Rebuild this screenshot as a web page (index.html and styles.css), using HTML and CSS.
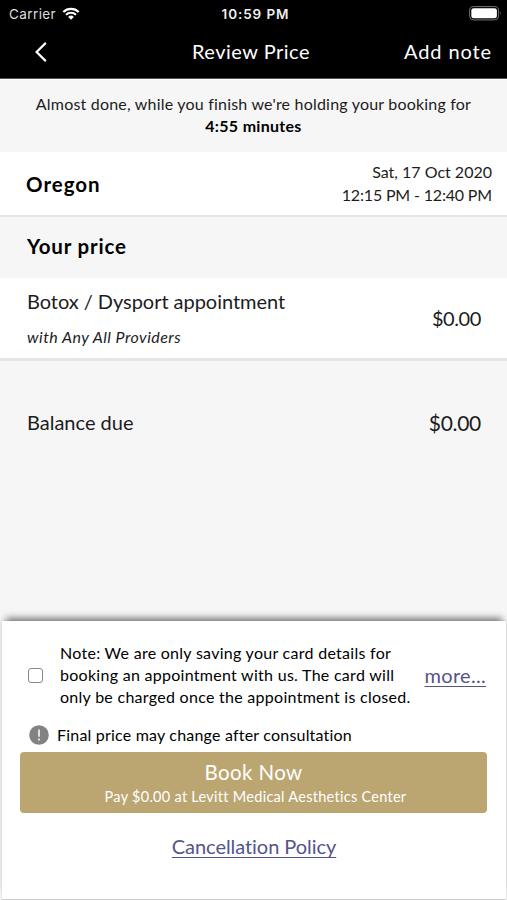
FILE: index.html
```html
<!DOCTYPE html>
<html lang="en">
<head>
    <meta charset="UTF-8">
    <meta name="viewport" content="width=device-width, initial-scale=1">
    <title>Review Price</title>
    <link rel="stylesheet" href="styles.css">
</head>
<body>
    <header class="top">
        <div class="status-bar">
            <div class="carrier">
                <span>Carrier</span>
                <svg class="wifi" viewBox="0 0 18 13" width="18" height="13">
                    <path d="M1.3 5 A11 11 0 0 1 16.7 5" fill="none" stroke="#fff" stroke-width="2.2"/>
                    <path d="M4 7.8 A7.2 7.2 0 0 1 14 7.8" fill="none" stroke="#fff" stroke-width="2.1"/>
                    <path d="M9 12.7 L6.2 9.9 A4 4 0 0 1 11.8 9.9 Z" fill="#fff"/>
                </svg>
            </div>
            <span class="clock">10:59 PM</span>
            <svg class="battery" viewBox="0 0 33 15" width="33" height="15">
                <rect x="0.6" y="0.6" width="29" height="13.3" rx="4" fill="none" stroke="#777" stroke-width="1"/>
                <rect x="2.3" y="2.3" width="25.6" height="9.9" rx="2.3" fill="#fff"/>
                <path d="M31 5 Q32.5 7.2 31 9.4 Z" fill="#777"/>
            </svg>
        </div>
        <nav class="nav-bar">
            <a class="back" href="#" aria-label="Back">
                <svg viewBox="0 0 12 20" width="12" height="20">
                    <path d="M10.8 0.9 L1.6 10 L10.8 19.1" fill="none" stroke="#fff" stroke-width="2.2"/>
                </svg>
            </a>
            <h1 class="title">Review Price</h1>
            <a class="add-note" href="#">Add note</a>
        </nav>
    </header>

    <main class="content">
        <div class="hold">
            <p class="hold-text">Almost done, while you finish we're holding your booking for</p>
            <p class="hold-time">4:55 minutes</p>
        </div>

        <div class="row location">
            <span class="place">Oregon</span>
            <div class="when">
                <div class="date">Sat, 17 Oct 2020</div>
                <div class="time">12:15 PM - 12:40 PM</div>
            </div>
        </div>

        <h2 class="section-title">Your price</h2>

        <div class="row service">
            <div>
                <div class="service-name">Botox / Dysport appointment</div>
                <div class="provider">with Any All Providers</div>
            </div>
            <span class="price">$0.00</span>
        </div>

        <div class="row balance">
            <span class="balance-label">Balance due</span>
            <span class="balance-price">$0.00</span>
        </div>
    </main>

    <footer class="sheet">
        <div class="consent">
            <input class="check" type="checkbox" aria-label="Accept">
            <p class="note">
                Note: We are only saving your card details for<br>
                booking an appointment with us. The card will<br>
                only be charged once the appointment is closed.
            </p>
            <a class="more" href="#">more...</a>
        </div>
        <div class="notice">
            <svg viewBox="0 0 20 20" width="20" height="20">
                <circle cx="10" cy="10" r="9.8" fill="#828282"/>
                <path d="M10 4.5 V11.8 M10 13.6 V15.6" stroke="#fff" stroke-width="1.5"/>
            </svg>
            <span>Final price may change after consultation</span>
        </div>
        <button class="book">
            <span class="book-title">Book Now</span>
            <span class="book-sub">Pay $0.00 at Levitt Medical Aesthetics Center</span>
        </button>
        <a class="policy" href="#">Cancellation Policy</a>
    </footer>
</body>
</html>
```

FILE: styles.css
```css
* { box-sizing: border-box; }
body {
    margin: 0;
    height: 900px;
    display: flex;
    flex-direction: column;
    overflow: hidden;
    background: #f6f6f6;
    color: #1c1c1c;
    font-family: Lato, "Liberation Sans", sans-serif;
    font-variant-ligatures: none;
}
h1, h2, p { margin: 0; font-weight: normal; }
a { color: inherit; text-decoration: none; }

/* header */
.top { height: 79px; background: #000; color: #fff; border-bottom: 1px solid #555; }
.status-bar, .nav-bar {
    display: grid;
    grid-template-columns: 1fr auto 1fr;
    align-items: center;
}
.status-bar {
    height: 27px;
    padding: 0 5px 0 9px;
    font-family: Inter, sans-serif;
    font-size: 13.5px;
}
.carrier { display: flex; align-items: center; gap: 6px; letter-spacing: 0.4px; color: #ddd; }
.clock { font-weight: 600; letter-spacing: 0.9px; font-size: 13.5px; color: #eee; }
.battery { justify-self: end; }
.nav-bar { height: 49px; padding: 0 15px 0 10px; font-size: 20px; }
.back { display: flex; margin: 1px 0 0 25px; }
.title { margin-top: -2px; font-size: 20px; letter-spacing: 0.5px; }
.add-note { justify-self: end; margin-top: -2px; letter-spacing: 0.9px; }

/* booking details */
.content { flex: 1; }
.hold { height: 73px; padding-top: 13px; text-align: center; font-size: 16px; line-height: 22px; border-top: 1px solid #fff; }
.hold-text { letter-spacing: 0.2px; }
.hold-time { font-weight: bold; letter-spacing: 0.3px; color: #000; }
.row { display: flex; align-items: center; justify-content: space-between; }
.location { height: 65px; padding: 0 15px 0 26px; background: #fff; border-bottom: 2px solid #e6e6e6; }
.place { font-size: 20.5px; font-weight: bold; letter-spacing: 1px; color: #000; }
.when { margin-top: -2px; text-align: right; font-size: 16px; line-height: 23px; }
.time { letter-spacing: -0.17px; }
.section-title {
    height: 61px;
    padding-left: 27px;
    font-size: 20.5px;
    line-height: 59px;
    font-weight: bold;
    letter-spacing: 0.8px;
    color: #000;
}
.service { height: 83px; padding: 0 26px 0 27px; background: #fff; border-bottom: 3px solid #e6e6e6; }
.service-name { font-size: 20px; line-height: 24px; letter-spacing: -0.04px; }
.provider { margin-top: 14px; font-size: 16px; line-height: 20px; font-style: italic; letter-spacing: 0.45px; }
.price { font-size: 20px; letter-spacing: -0.4px; }
.balance { height: 122px; padding: 0 26px 0 27px; font-size: 20px; }
.balance-price { font-size: 21px; letter-spacing: -0.3px; }

/* bottom sheet */
.sheet {
    height: 279px;
    margin: 0 1px 0 2px;
    padding: 21px 18px 0;
    background: #fff;
    border-bottom: 1px solid #ccc;
    box-shadow: 0 -7px 7px -4px #777, 0 0 2px #ccc;
}
.consent { display: flex; align-items: center; }
.check {
    appearance: none;
    width: 15px;
    height: 15px;
    margin: 0 17px 0 8px;
    border: 1px solid #888;
    border-radius: 3px;
    background: #fff;
}
.note { flex: 1; font-size: 16px; line-height: 22px; letter-spacing: 0.28px; color: #000; white-space: nowrap; }
.more, .policy { font-size: 20px; color: #54548a; text-decoration: underline; text-decoration-thickness: 1px; text-underline-offset: 3px; }
.more { margin-right: 2px; letter-spacing: 0.3px; }
.notice { display: flex; align-items: center; gap: 8px; height: 20px; margin: 17px 0 7px 9px; font-size: 16px; color: #000; }
.notice span { margin-top: -2px; letter-spacing: 0.2px; }
.book {
    display: flex;
    flex-direction: column;
    align-items: center;
    width: 467px;
    height: 61px;
    padding: 8px 0 0;
    border: 0;
    border-radius: 4px;
    background: #bba672;
    color: #fff;
    font-family: inherit;
}
.book-title { font-size: 20.5px; line-height: 25px; letter-spacing: 0.4px; }
.book-sub { font-size: 14.5px; line-height: 24px; letter-spacing: 0.28px; padding-left: 4px; }
.policy { display: block; margin-top: 21px; text-align: center; line-height: 24px; letter-spacing: -0.05px; }
```
